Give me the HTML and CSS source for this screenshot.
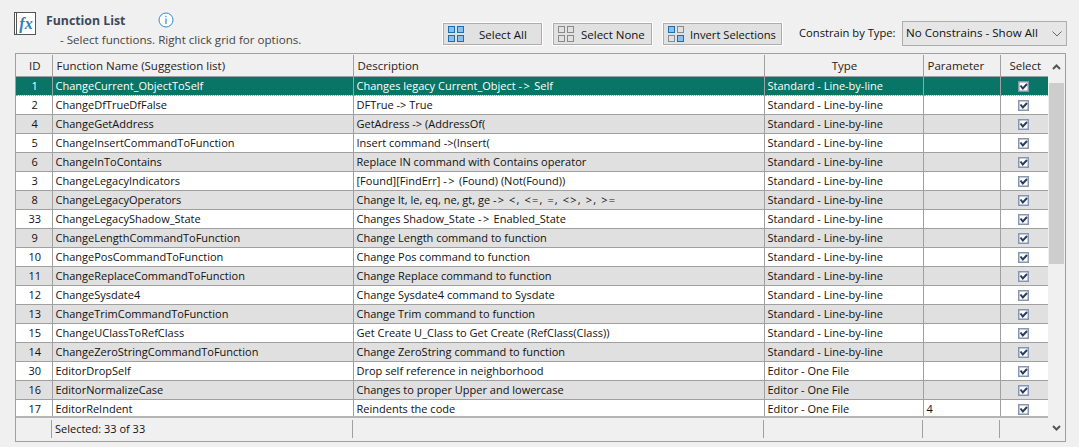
FILE: index.html
```html
<!DOCTYPE html>
<html>
<head>
  <meta charset="utf-8">
  <title>Function List</title>
  <link rel="stylesheet" href="styles.css">
</head>
<body>
  <div class="top-bar">
    <div class="fx-icon"><span>fx</span></div>
    <div class="title-block">
      <div class="title-line">
        <span class="title">Function List</span>
        <svg class="info-icon" width="16" height="16" viewBox="0 0 16 16"><circle cx="8" cy="8" r="7" fill="#fff" stroke="#2f8fd0" stroke-width="1"/><rect x="7.4" y="6.5" width="1.2" height="5.5" fill="#2f8fd0"/><rect x="7.4" y="3.8" width="1.2" height="1.4" fill="#2f8fd0"/></svg>
      </div>
      <div class="subtitle">- Select functions. Right click grid for options.</div>
    </div>
    <button class="btn btn-all">
      <svg width="16" height="16" viewBox="0 0 16 16"><g fill="#8cc0ec" stroke="#1a6fb5"><rect x="0.5" y="0.5" width="6" height="6"/><rect x="9.5" y="0.5" width="6" height="6"/><rect x="0.5" y="9.5" width="6" height="6"/><rect x="9.5" y="9.5" width="6" height="6"/></g></svg>
      <span>Select All</span>
    </button>
    <button class="btn btn-none">
      <svg width="16" height="16" viewBox="0 0 16 16"><g fill="none" stroke="#8a8a8a"><rect x="0.5" y="0.5" width="6" height="6"/><rect x="9.5" y="0.5" width="6" height="6"/><rect x="0.5" y="9.5" width="6" height="6"/><rect x="9.5" y="9.5" width="6" height="6"/></g></svg>
      <span>Select None</span>
    </button>
    <button class="btn btn-invert">
      <svg width="16" height="16" viewBox="0 0 16 16"><rect x="0.5" y="0.5" width="6" height="6" fill="#8cc0ec" stroke="#1a6fb5"/><rect x="9.5" y="0.5" width="6" height="6" fill="none" stroke="#8a8a8a"/><rect x="0.5" y="9.5" width="6" height="6" fill="none" stroke="#8a8a8a"/><rect x="9.5" y="9.5" width="6" height="6" fill="#8cc0ec" stroke="#1a6fb5"/></svg>
      <span>Invert Selections</span>
    </button>
    <span class="constrain-label">Constrain by Type:</span>
    <div class="combo">
      <span>No Constrains - Show All</span>
      <svg width="10" height="6" viewBox="0 0 10 6"><path d="M0.5 0.5 L5 5 L9.5 0.5" fill="none" stroke="#666"/></svg>
    </div>
  </div>

  <div class="grid-box">
    <div class="grid-main">
      <div class="grid-scroll">
        <table class="grid">
          <colgroup>
            <col class="c-id"><col class="c-name"><col class="c-desc"><col class="c-type"><col class="c-param"><col class="c-sel">
          </colgroup>
          <thead>
            <tr>
              <th class="mid">ID</th><th>Function Name (Suggestion list)</th><th>Description</th><th class="mid">Type</th><th>Parameter</th><th class="mid">Select</th>
            </tr>
          </thead>
          <tbody id="rows"></tbody>
        </table>
      </div>
      <div class="grid-foot">
        <div></div><div class="foot-cell">Selected: 33 of 33</div><div class="foot-cell"></div><div class="foot-cell"></div><div class="foot-cell"></div><div class="foot-cell"></div>
      </div>
    </div>
    <div class="scrollbar">
      <div class="arrow"><svg width="9" height="6" viewBox="0 0 9 6"><path d="M1 5 L4.5 1.5 L8 5" fill="none" stroke="#555" stroke-width="2"/></svg></div>
      <div class="track"><div class="thumb"></div></div>
      <div class="arrow"><svg width="9" height="6" viewBox="0 0 9 6"><path d="M1 1 L4.5 4.5 L8 1" fill="none" stroke="#555" stroke-width="2"/></svg></div>
    </div>
  </div>

  <script>
    var std = 'Standard - Line-by-line'
    var edt = 'Editor - One File'
    var arrow = '<span class="ops">-&gt;</span>'
    var data = [
      ['1', 'ChangeCurrent_ObjectToSelf', 'Changes legacy Current_Object ' + arrow + ' Self', std, ''],
      ['2', 'ChangeDfTrueDfFalse', 'DFTrue -&gt; True', std, ''],
      ['4', 'ChangeGetAddress', 'GetAdress -&gt; (AddressOf(', std, ''],
      ['5', 'ChangeInsertCommandToFunction', 'Insert command -&gt;(Insert(', std, ''],
      ['6', 'ChangeInToContains', 'Replace IN command with Contains operator', std, ''],
      ['3', 'ChangeLegacyIndicators', '[Found][FindErr] ' + arrow + ' (Found) (Not(Found))', std, ''],
      ['8', 'ChangeLegacyOperators', 'Change lt, le, eq, ne, gt, ge <span class="ops-long">-&gt; &lt;, &lt;=, =, &lt;&gt;, &gt;, &gt;=</span>', std, ''],
      ['33', 'ChangeLegacyShadow_State', 'Changes Shadow_State ' + arrow + ' Enabled_State', std, ''],
      ['9', 'ChangeLengthCommandToFunction', 'Change Length command to function', std, ''],
      ['10', 'ChangePosCommandToFunction', 'Change Pos command to function', std, ''],
      ['11', 'ChangeReplaceCommandToFunction', 'Change Replace command to function', std, ''],
      ['12', 'ChangeSysdate4', 'Change Sysdate4 command to Sysdate', std, ''],
      ['13', 'ChangeTrimCommandToFunction', 'Change Trim command to function', std, ''],
      ['15', 'ChangeUClassToRefClass', 'Get Create U_Class to Get Create (RefClass(Class))', std, ''],
      ['14', 'ChangeZeroStringCommandToFunction', 'Change ZeroString command to function', std, ''],
      ['30', 'EditorDropSelf', 'Drop self reference in neighborhood', edt, ''],
      ['16', 'EditorNormalizeCase', 'Changes to proper Upper and lowercase', edt, ''],
      ['17', 'EditorReIndent', 'Reindents the code', edt, '4']
    ]
    var check = '<svg width="11" height="11" viewBox="0 0 11 11"><rect x="0.75" y="0.75" width="9.5" height="9.5" fill="#fff" stroke="#8496b3" stroke-width="1.5"/><path d="M2.5 4.5 L4.8 7.5 L9 3" fill="none" stroke="#2b3a55" stroke-width="2"/></svg>'
    var body = document.getElementById('rows')
    data.forEach(function (r, i) {
      var tr = document.createElement('tr')
      tr.className = i === 0 ? 'current' : (i % 2 === 0 ? 'alt' : '')
      r.forEach(function (v, n) {
        var td = document.createElement('td')
        if (n === 0) td.className = 'mid'
        td.innerHTML = v
        tr.appendChild(td)
      })
      var sel = document.createElement('td')
      sel.className = 'mid sel'
      sel.innerHTML = check
      tr.appendChild(sel)
      body.appendChild(tr)
    })
  </script>
</body>
</html>
```

FILE: styles.css
```css
html, body {
  margin: 0;
  height: 447px;
  overflow: hidden;
}

body {
  background: #f0f0f0;
  font-family: "Open Sans", "Noto Sans", sans-serif;
  font-size: 11px;
  color: #111;
  padding: 0 12px 0 15px;
  box-sizing: border-box;
}

.top-bar {
  display: flex;
  align-items: flex-start;
  height: 53px;
  font-size: 11.5px;
}

.fx-icon {
  flex: none;
  margin: 12px 0 0 -1px;
  width: 18px;
  height: 21px;
  background: #fff;
  border: 1px solid #555;
  border-left: 3px double #555;
  display: flex;
  align-items: center;
  justify-content: center;
  font-family: "Liberation Serif", serif;
  font-style: italic;
  font-weight: 700;
  font-size: 16px;
  color: #2a7fc0;
}

.title-block {
  flex: none;
  margin-left: 10px;
  width: 397px;
  padding-top: 12px;
}

.title-line {
  display: flex;
  align-items: center;
  height: 16px;
}

.title {
  font-weight: 700;
  font-size: 12.3px;
  color: #3a4a5a;
  width: 112px;
  white-space: nowrap;
}

.info-icon {
  margin-top: -1px;
}

.subtitle {
  margin: 4px 0 0 14px;
  font-size: 11.6px;
  color: #444;
  white-space: nowrap;
}

.btn {
  flex: none;
  margin: 23px 11px 0 0;
  height: 22px;
  background: #e1e1e1;
  border: 1px solid #adadad;
  outline: 1px solid #fff;
  display: flex;
  align-items: center;
  font: inherit;
  color: #111;
  padding: 0 0 0 4px;
  box-sizing: border-box;
  white-space: nowrap;
}

.btn-all { width: 99px; }
.btn-all span { margin-left: 15px; }
.btn-none { width: 99px; }
.btn-none span { margin-left: 7px; }
.btn-invert { width: 119px; margin-right: 17px; }
.btn-invert span { margin-left: 6px; font-size: 11.2px; }

.constrain-label {
  flex: none;
  margin-top: 25px;
  font-size: 11.2px;
  white-space: nowrap;
  width: 103px;
}

.combo {
  flex: none;
  margin-top: 21px;
  width: 165px;
  height: 25px;
  font-size: 11.6px;
  background: #e6e6e6;
  border: 1px solid #adadad;
  box-sizing: border-box;
  display: flex;
  align-items: center;
  justify-content: space-between;
  padding: 0 4px 3px 3px;
  white-space: nowrap;
}

.combo svg {
  margin-top: 4px;
}

.grid-box {
  display: flex;
  width: 1051px;
  height: 389px;
  border: 1px solid #a0a0a0;
  box-sizing: border-box;
}

.grid-main {
  width: 1032px;
}

.grid-scroll {
  height: 362px;
  overflow: hidden;
  border-bottom: 2px solid #b5b5b5;
}

.grid {
  table-layout: fixed;
  border-collapse: collapse;
  width: 1032px;
  margin-top: 1px;
}

.c-id { width: 36px; }
.c-name { width: 301px; }
.c-desc { width: 411px; }
.c-type { width: 159px; }
.c-param { width: 77px; }
.c-sel { width: 48px; }

.grid th {
  height: 21px;
  font-weight: 400;
  font-size: 11.5px;
  text-align: left;
  padding: 0 0 0 4px;
  color: #2a1a20;
  border-right: 1px solid #a0a0a0;
  border-bottom: 1px solid #a0a0a0;
}

.grid th:last-child,
.grid td:last-child {
  border-right: 0;
}

.grid td {
  height: 16px;
  padding: 0 0 2px 3px;
  white-space: nowrap;
  overflow: hidden;
  background: #fff;
  border-right: 1px solid #a0a0a0;
  border-bottom: 1px solid #a0a0a0;
  line-height: 15px;
}

.grid .mid {
  text-align: center;
  padding-left: 2px;
}

.grid .alt td {
  background: #e0e0e0;
}

.grid .current td {
  background: #097566;
  color: #fff;
  border-top: 1px dotted #e08a9a;
  border-bottom: 1px dotted #e08a9a;
}

.grid .sel {
  padding: 0 2px 0 0;
  height: 18px;
}

.grid .sel svg {
  display: block;
  margin: 0 auto;
}

.ops {
  letter-spacing: 1.5px;
}

.ops-long {
  letter-spacing: 1.15px;
}

.grid-foot {
  display: grid;
  grid-template-columns: 36px 301px 411px 159px 77px 48px;
  margin-top: 2px;
  height: 17px;
}

.foot-cell {
  border-left: 1px solid #a0a0a0;
  padding-left: 3px;
  margin-left: -1px;
  white-space: nowrap;
  line-height: 18px;
}

.scrollbar {
  width: 17px;
  display: flex;
  flex-direction: column;
}

.arrow {
  height: 26px;
  display: flex;
  align-items: center;
  justify-content: center;
  flex: none;
}

.track {
  flex: 1;
  padding: 3px 1px 0;
}

.thumb {
  height: 181px;
  background: #cdcdcd;
}
```
